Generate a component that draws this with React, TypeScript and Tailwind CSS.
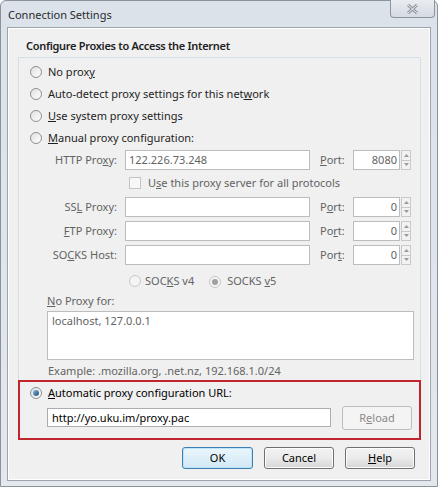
import React from "react";

const F = { fontFamily: '"Noto Sans", "Segoe UI", sans-serif' };

function Radio({ checked = false, disabled = false }: { checked?: boolean; disabled?: boolean }) {
  return (
    <span
      className={
        "inline-flex items-center justify-center w-[12px] h-[12px] rounded-full border shrink-0 " +
        (disabled ? "border-[#c8c8c8] bg-[#f4f4f4]" : "border-[#8e8f8f] bg-gradient-to-br from-[#e0e0e0] to-[#ffffff]")
      }
    >
      {checked && (
        <span
          className={
            "w-[6px] h-[6px] rounded-full " +
            (disabled ? "bg-[#a0a0a0]" : "bg-gradient-to-br from-[#8ab4dc] to-[#1b4e84]")
          }
        />
      )}
    </span>
  );
}

function Spinner() {
  return (
    <div className="flex flex-col w-[10px] h-[20px] ml-px">
      <div className="flex-1 border border-[#c9c9c9] bg-[#f2f2f2] flex items-center justify-center">
        <svg width="5" height="3" viewBox="0 0 5 3"><path d="M0 3 L2.5 0 L5 3 Z" fill="#9a9a9a" /></svg>
      </div>
      <div className="flex-1 border border-t-0 border-[#c9c9c9] bg-[#f2f2f2] flex items-center justify-center">
        <svg width="5" height="3" viewBox="0 0 5 3"><path d="M0 0 L2.5 3 L5 0 Z" fill="#9a9a9a" /></svg>
      </div>
    </div>
  );
}

function ProxyRow({ label, value, port, portLabel }: { label: React.ReactNode; value: string; port: string; portLabel: React.ReactNode }) {
  return (
    <div className="flex items-center h-[24px]">
      <div className="w-[98px] text-right text-[#636363]">{label}</div>
      <div className="ml-[8px] w-[185px] h-[20px] border border-[#bdbdbd] bg-white flex items-center px-[3px] text-[#636363]">
        {value}
      </div>
      <div className="ml-[10px] w-[33px] text-[#636363]">{portLabel}</div>
      <div className="w-[47px] h-[20px] border border-[#bdbdbd] bg-white flex items-center justify-end px-[2px] text-[#636363]">
        {port}
      </div>
      <Spinner />
    </div>
  );
}

function Btn({ children, def = false, disabled = false, w }: { children: React.ReactNode; def?: boolean; disabled?: boolean; w: string }) {
  return (
    <div
      className={
        w +
        " flex items-center justify-center rounded-[3px] border " +
        (disabled
          ? "border-[#bdbdbd] bg-[#f4f4f4] text-[#8a8a8a]"
          : def
          ? "border-[#3c7fb1] bg-gradient-to-b from-[#eaf6fd] to-[#d2e8f5] text-black shadow-[inset_0_0_0_1px_#bfe3f8]"
          : "border-[#707070] bg-gradient-to-b from-[#f2f2f2] via-[#ebebeb] to-[#d6d6d6] text-black shadow-[inset_0_0_0_1px_#fcfcfc]")
      }
    >
      {children}
    </div>
  );
}

export default function App() {
  return (
    <div className="w-[441px] h-[489px] bg-white" style={F}>
      <div className="w-[438px] h-[487px] bg-gradient-to-b from-[#dbe2ea] to-[#e3e8ee] border border-[#8b9299] rounded-t-[6px] flex flex-col text-[11px] leading-[14px] text-[#1e1e1e]">
        {/* Title bar */}
        <div className="h-[26px] flex items-start justify-between pl-[7px] pr-[2px]">
          <div className="pt-[6px] text-[11px] leading-[16px] text-[#2a2a2a]">Connection Settings</div>
          <div className="-mt-px w-[45px] h-[18px] border border-[#8d949c] border-t-0 rounded-b-[4px] bg-gradient-to-b from-[#e9edf1] to-[#d4dbe3] flex items-center justify-center">
            <svg width="11" height="10" viewBox="0 0 11 10">
              <path d="M1 1 L10 9 M10 1 L1 9" stroke="#8c939b" strokeWidth="3" />
              <path d="M1 1 L10 9 M10 1 L1 9" stroke="#eef1f4" strokeWidth="1" />
            </svg>
          </div>
        </div>
        {/* Client area */}
        <div className="mx-[6px] h-[454px] border border-[#9ca3ab] bg-[#f0f0f0] flex flex-col px-[10px] shadow-[inset_0_0_0_1px_#ffffff]">
          <div className="h-[29px] pt-[10px] pl-[8px] text-[11px] leading-[16px] font-semibold tracking-[-0.3px] text-[#222]">
            Configure Proxies to Access the Internet
          </div>
          <div className="w-[403px] border border-[#d5dfe5] flex flex-col">
            <div className="pt-[3px] pl-[11px]">
              {[
                <>No prox<u>y</u></>,
                <>Auto-detect proxy settings for this net<u>w</u>ork</>,
                <><u>U</u>se system proxy settings</>,
                <><u>M</u>anual proxy configuration:</>,
              ].map((t, i) => (
                <div key={i} className="flex items-center h-[22px]">
                  <Radio />
                  <span className="ml-[6px]">{t}</span>
                </div>
              ))}
            </div>
            <div className="flex items-center h-[22px]">
              <div className="w-[98px] text-right text-[#636363]">HTTP Pro<u>x</u>y:</div>
              <div className="ml-[8px] w-[185px] h-[20px] border border-[#bdbdbd] bg-white flex items-center px-[3px] text-[#636363]">
                122.226.73.248
              </div>
              <div className="ml-[10px] w-[33px] text-[#636363]"><u>P</u>ort:</div>
              <div className="w-[47px] h-[20px] border border-[#bdbdbd] bg-white flex items-center justify-end px-[2px] text-[#636363]">
                8080
              </div>
              <Spinner />
            </div>
            <div className="flex items-center h-[24px] pl-[110px]">
              <span className="w-[12px] h-[12px] border border-[#c4c4c4] bg-[#f7f7f7]" />
              <span className="ml-[7px] text-[#636363]">U<u>s</u>e this proxy server for all protocols</span>
            </div>
            <ProxyRow label={<>SS<u>L</u> Proxy:</>} value="" port="0" portLabel={<>P<u>o</u>rt:</>} />
            <ProxyRow label={<><u>F</u>TP Proxy:</>} value="" port="0" portLabel={<>Po<u>r</u>t:</>} />
            <ProxyRow label={<>SO<u>C</u>KS Host:</>} value="" port="0" portLabel={<>Por<u>t</u>:</>} />
            <div className="flex items-center h-[27px] pl-[110px] text-[#636363]">
              <Radio disabled />
              <span className="ml-[4px]">SOC<u>K</u>S v4</span>
              <span className="ml-[15px]"><Radio checked disabled /></span>
              <span className="ml-[6px]">SOCKS <u>v</u>5</span>
            </div>
            <div className="h-[14px] pl-[28px] text-[#636363]"><u>N</u>o Proxy for:</div>
            <div className="ml-[28px] mt-[3px] w-[367px] h-[49px] border border-[#bdbdbd] bg-white px-[4px] pt-[2px] text-[#636363]">
              localhost, 127.0.0.1
            </div>
            <div className="h-[20px] pt-[4px] pl-[29px] text-[#636363]">Example: .mozilla.org, .net.nz, 192.168.1.0/24</div>
            <div className="-mx-px -mb-px border-2 border-[#c0262e] flex flex-col">
              <div className="flex items-center h-[22px] pl-[10px]">
                <Radio checked />
                <span className="ml-[6px] text-black"><u>A</u>utomatic proxy configuration URL:</span>
              </div>
              <div className="flex items-center h-[27px] pl-[27px]">
                <div className="w-[284px] h-[19px] border border-[#abadb3] bg-white flex items-center px-[4px] text-black">
                  http://yo.uku.im/proxy.pac
                </div>
                <div className="ml-[11px]">
                  <Btn w="w-[70px] h-[24px]" disabled>R<u>e</u>load</Btn>
                </div>
              </div>
              <div className="h-[7px]" />
            </div>
          </div>
          <div className="flex justify-end mt-[7px] pr-[5px] gap-[11px]">
            <Btn w="w-[71px] h-[22px]" def>OK</Btn>
            <Btn w="w-[70px] h-[22px]">Cancel</Btn>
            <Btn w="w-[70px] h-[22px]"><u>H</u>elp</Btn>
          </div>
        </div>
      </div>
    </div>
  );
}
